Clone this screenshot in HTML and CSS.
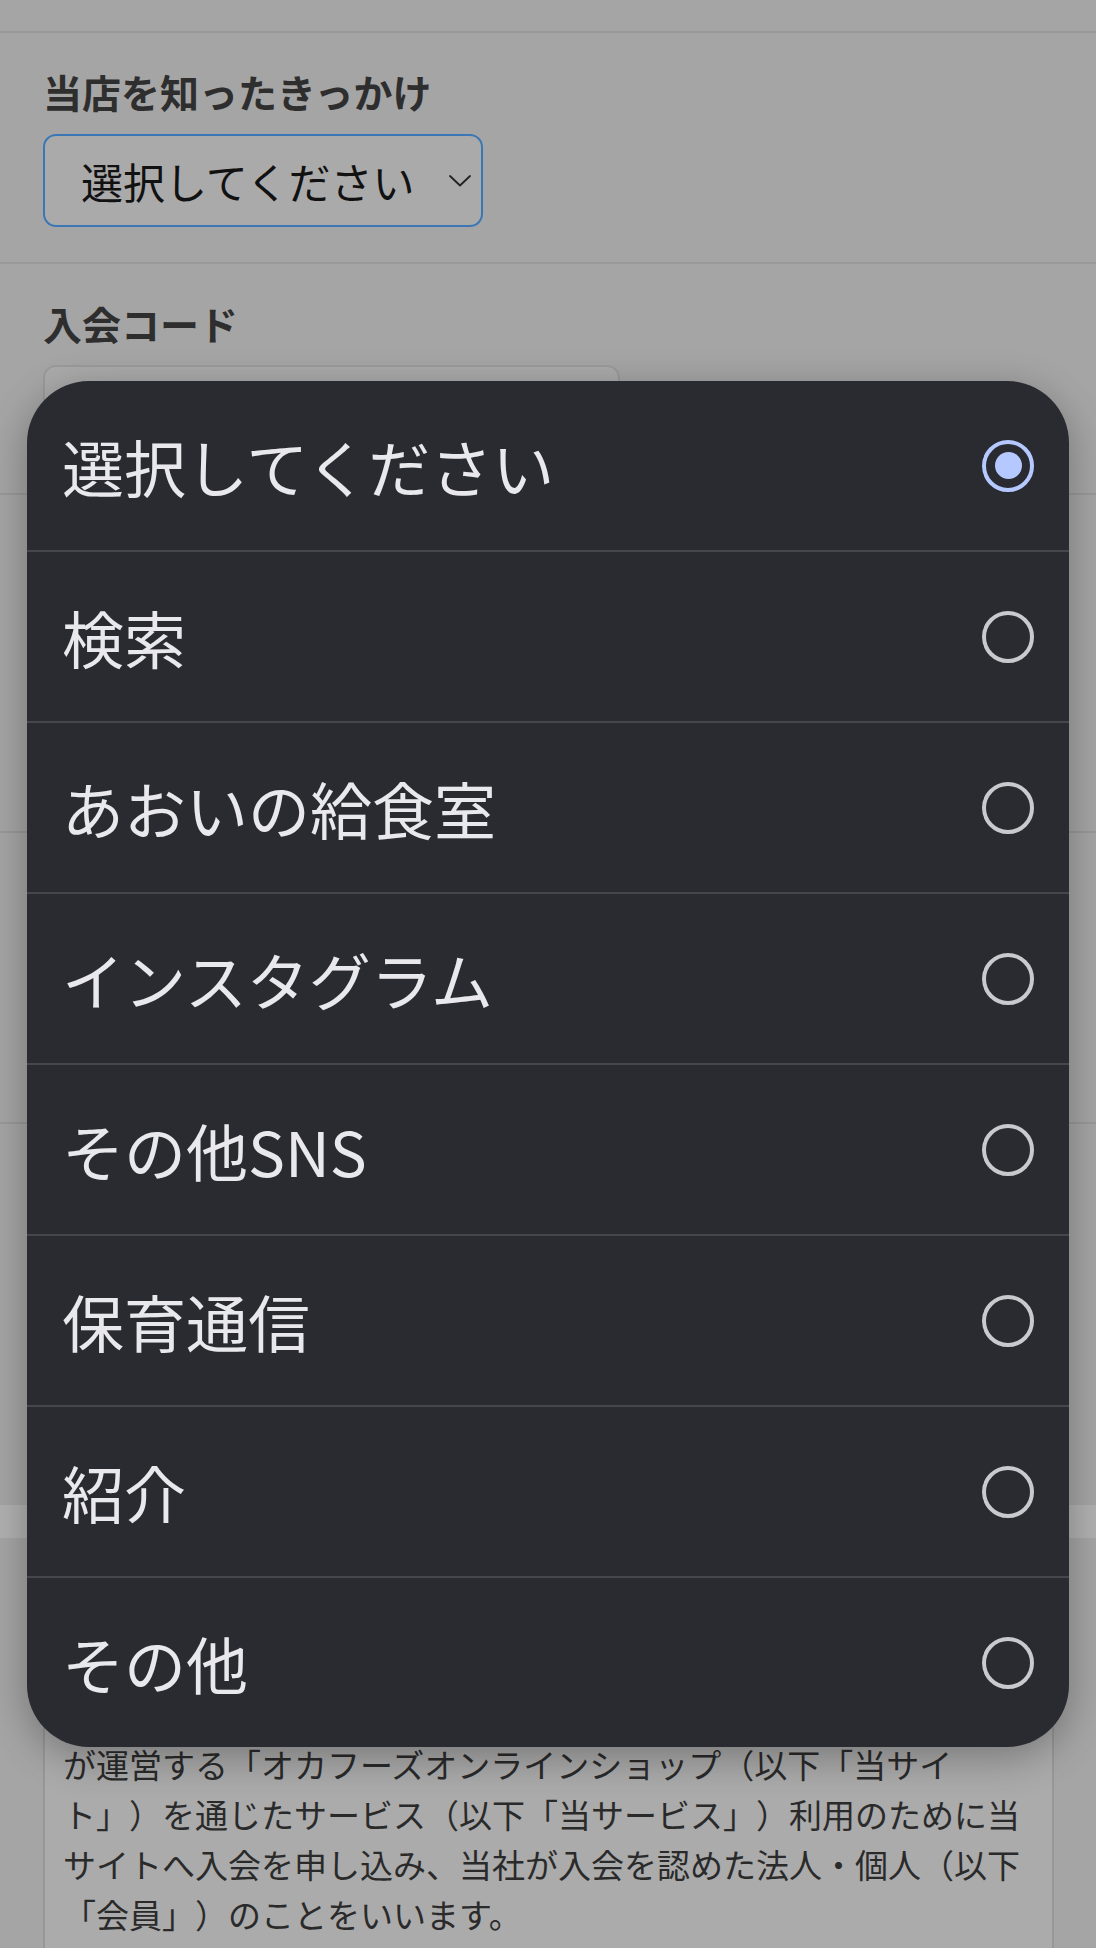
FILE: index.html
```html
<!DOCTYPE html>
<html lang="ja">
<head>
    <meta charset="UTF-8">
    <meta name="viewport" content="width=device-width, initial-scale=1.0">
    <title>会員登録</title>
    <link rel="stylesheet" href="styles.css">
</head>
<body>

    <div class="page">
        <div class="field-top"></div>

        <section class="field">
            <label class="field-label">当店を知ったきっかけ</label>
            <div class="select">
                <span>選択してください</span>
                <svg class="chevron" width="22" height="12" viewBox="0 0 22 12">
                    <polyline points="1,1 11,10.5 21,1" fill="none" stroke="#222" stroke-width="1.8" stroke-linecap="round" stroke-linejoin="round"/>
                </svg>
            </div>
        </section>

        <section class="field">
            <label class="field-label">入会コード</label>
            <div class="input input-short"></div>
        </section>

        <section class="field">
            <label class="field-label">備考</label>
            <div class="input input-area"></div>
        </section>

        <section class="field">
            <label class="field-label">紹介者コード</label>
            <div class="input input-short"></div>
            <p class="note">※半角英数字で入力してください</p>
        </section>

        <section class="field field-last">
            <label class="field-label">ご要望</label>
            <div class="input input-large"></div>
        </section>

        <div class="band"></div>

        <section class="terms">
            <h2 class="field-label">会員規約</h2>
            <div class="terms-box">
                <p>第1条（会員）</p>
                <p>1.「会員」とは、株式会社オカフーズ（以下「当社」）</p>
                <p>が運営する「オカフーズオンラインショップ（以下「当サイト」）を通じたサービス（以下「当サービス」）利用のために当サイトへ入会を申し込み、当社が入会を認めた法人・個人（以下「会員」）のことをいいます。</p>
            </div>
        </section>
    </div>

    <!-- iOS のセレクトピッカー -->
    <div class="sheet">
        <div class="option">
            <span>選択してください</span>
            <span class="radio checked"></span>
        </div>
        <div class="option">
            <span>検索</span>
            <span class="radio"></span>
        </div>
        <div class="option">
            <span>あおいの給食室</span>
            <span class="radio"></span>
        </div>
        <div class="option">
            <span>インスタグラム</span>
            <span class="radio"></span>
        </div>
        <div class="option">
            <span>その他SNS</span>
            <span class="radio"></span>
        </div>
        <div class="option">
            <span>保育通信</span>
            <span class="radio"></span>
        </div>
        <div class="option">
            <span>紹介</span>
            <span class="radio"></span>
        </div>
        <div class="option">
            <span>その他</span>
            <span class="radio"></span>
        </div>
    </div>

</body>
</html>
```

FILE: styles.css
```css
body {
    margin: 0;
    background-color: #a5a5a5;
    font-family: "Noto Sans CJK JP", "Noto Sans", sans-serif;
    text-spacing-trim: space-all;
    height: 1948px;
    overflow: hidden;
}

.page {
    width: 1096px;
}

.field-top {
    height: 31px;
    border-bottom: 2px solid #999;
}

.field {
    padding: 34px 43px 35px;
    border-bottom: 2px solid #999;
}

.field + .field {
    padding-top: 35px;
}

.field-last {
    border-bottom: none;
}

.field-label {
    display: block;
    margin: 0 0 18px;
    font-size: 39px;
    line-height: 48px;
    font-weight: bold;
    color: #2e2e2e;
}

.field:first-of-type .field-label {
    margin-bottom: 19px;
}

.select {
    box-sizing: border-box;
    width: 440px;
    height: 93px;
    padding: 0 10px 0 36px;
    display: flex;
    align-items: center;
    justify-content: space-between;
    border: 2px solid #3b77b5;
    border-radius: 13px;
    background-color: #aaa;
    font-size: 42px;
    color: #111;
}

.input {
    box-sizing: border-box;
    border: 2px solid #9a9a9a;
    border-radius: 13px;
    background-color: #aaa;
}

.input-short {
    width: 577px;
    height: 93px;
}

.input-area {
    width: 1010px;
    height: 200px;
}

.input-large {
    width: 1010px;
    height: 245px;
}

.note {
    margin: 18px 0 0;
    font-size: 30px;
    line-height: 42px;
    color: #333;
}

.band {
    height: 33px;
    background-color: #b1b1b1;
}

.terms {
    padding: 25px 42px 0 43px;
}

.terms .field-label {
    margin-bottom: 16px;
}

.terms-box {
    box-sizing: border-box;
    height: 400px;
    padding: 10px 18px;
    border: 2px solid #979797;
    background-color: #ababab;
    font-size: 33px;
    line-height: 50px;
    color: #2a2a2a;
    line-break: strict;
}

.terms-box p {
    margin: 0;
}

/* ピッカー */
.sheet {
    position: fixed;
    left: 27px;
    top: 381px;
    width: 1042px;
    border-radius: 62px;
    overflow: hidden;
    background-color: #2a2b31;
    box-shadow: 0 10px 40px rgba(0, 0, 0, 0.3);
}

.option {
    height: 169px;
    padding: 0 35px;
    display: flex;
    align-items: center;
    justify-content: space-between;
    font-size: 62px;
    color: #e8e8ed;
}

.option + .option {
    border-top: 2px solid #46474d;
}

.radio {
    box-sizing: border-box;
    width: 52px;
    height: 52px;
    border: 4px solid #c9c9ce;
    border-radius: 50%;
    display: flex;
    align-items: center;
    justify-content: center;
}

.radio.checked {
    border-color: #b5c8ff;
}

.radio.checked::after {
    content: "";
    width: 27px;
    height: 27px;
    border-radius: 50%;
    background-color: #b5c8ff;
}
```
